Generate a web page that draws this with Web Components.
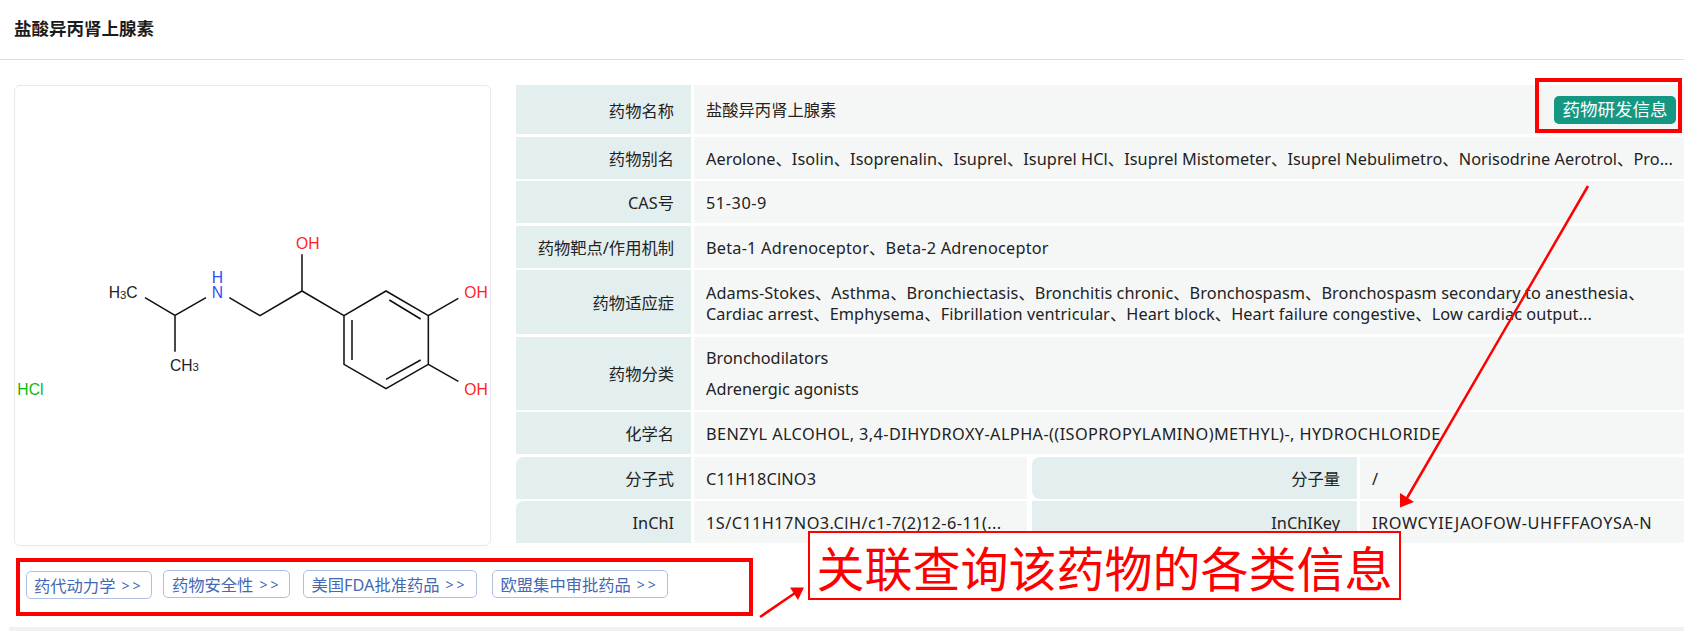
<!DOCTYPE html>
<html lang="zh">
<head>
<meta charset="utf-8">
<title>盐酸异丙肾上腺素</title>
<style>
  html, body { margin: 0; padding: 0; height: 631px; overflow: hidden; background: #fff; }
  body {
    position: relative;
    font-family: "Noto Sans", "Noto Sans CJK SC", sans-serif;
    font-size: 16px;
    color: #222;
  }
</style>
</head>
<body>
<drug-header>盐酸异丙肾上腺素</drug-header>

<drug-main>
  <mol-card slot="image"></mol-card>
  <info-table slot="info">
    <info-row label="药物名称" h="49">
      <drug-name>盐酸异丙肾上腺素<dev-button slot="action">药物研发信息</dev-button></drug-name>
    </info-row>
    <info-row label="药物别名" h="42" track=".05">Aerolone、Isolin、Isoprenalin、Isuprel、Isuprel HCl、Isuprel Mistometer、Isuprel Nebulimetro、Norisodrine Aerotrol、Pro...</info-row>
    <info-row label="CAS号" h="42" track=".55">51-30-9</info-row>
    <info-row label="药物靶点/作用机制" h="42" track=".22">Beta-1 Adrenoceptor、Beta-2 Adrenoceptor</info-row>
    <info-row label="药物适应症" h="64" track=".07">Adams-Stokes、Asthma、Bronchiectasis、Bronchitis chronic、Bronchospasm、Bronchospasm secondary to anesthesia、<br>Cardiac arrest、Emphysema、Fibrillation ventricular、Heart block、Heart failure congestive、Low cardiac output...</info-row>
    <info-row label="药物分类" h="73" lines="31" pad="1">Bronchodilators<br>Adrenergic agonists</info-row>
    <info-row label="化学名" h="42" track=".41">BENZYL ALCOHOL, 3,4-DIHYDROXY-ALPHA-((ISOPROPYLAMINO)METHYL)-, HYDROCHLORIDE</info-row>
    <info-pair>
      <info-row class="left" label="分子式" h="42" corner="tl" track=".15">C11H18ClNO3</info-row>
      <info-row class="right" label="分子量" h="42" corner="bl">/</info-row>
    </info-pair>
    <info-pair>
      <info-row class="left" label="InChI" h="42" corner="tl" track=".44">1S/C11H17NO3.ClH/c1-7(2)12-6-11(...</info-row>
      <info-row class="right" label="InChIKey" h="42" track=".58">IROWCYIEJAOFOW-UHFFFAOYSA-N</info-row>
    </info-pair>
  </info-table>
</drug-main>

<link-bar>
  <link-tag>药代动力学</link-tag>
  <link-tag>药物安全性</link-tag>
  <link-tag>美国FDA批准药品</link-tag>
  <link-tag>欧盟集中审批药品</link-tag>
</link-bar>

<page-strip></page-strip>

<note-layer>关联查询该药物的各类信息</note-layer>

<script>
function define(name, html, setup) {
  customElements.define(name, class extends HTMLElement {
    constructor() {
      super();
      this.attachShadow({ mode: 'open' }).innerHTML = html;
    }
    connectedCallback() {
      if (setup) setup(this, this.shadowRoot);
    }
  });
}

define('drug-header', `
  <style>
    :host {
      display: flex;
      align-items: center;
      box-sizing: border-box;
      height: 60px;
      padding: 0 0 4px 14px;
      border-bottom: 1px solid #dedede;
      font: 700 17.5px "Noto Sans CJK SC", sans-serif;
      color: #1c1c1c;
    }
  </style>
  <slot></slot>`);

define('drug-main', `
  <style>
    :host { display: flex; align-items: flex-start; padding: 25px 0 0 14px; gap: 25px; }
  </style>
  <slot name="image"></slot>
  <slot name="info"></slot>`);

define('mol-card', `
  <style>
    :host {
      display: block;
      flex: none;
      width: 475px;
      height: 459px;
      border: 1px solid #e6eaed;
      border-radius: 6px;
    }
    svg { display: block; }
    text { font-family: "Liberation Sans", sans-serif; font-size: 47px; }
    .o { fill: #ff1f1f; }
    .n { fill: #3050f8; }
    .c { fill: #222; }
    .cl { fill: #10b810; }
    .sub { font-size: 34px; }
  </style>
  <svg width="475" height="459" viewBox="15 86 475 459">
    <g transform="translate(0 220) scale(.33333)">
      <path fill="none" stroke="#111" stroke-width="4.6" d="M435 233 525 286 618 233M525 286V395M688 233 780 287 906 213 1032 287 1158 213 1285 287V433L1158 506 1032 433V287M906 213V103M1285 287 1375 235M1285 433 1375 484M1168 240 1262 297M1056 300V420M1158 478 1262 420"/>
      <text class="o" x="888" y="87">OH</text>
      <text class="n" x="635" y="189">H</text>
      <text class="n" x="635" y="235">N</text>
      <text class="c" x="326" y="234">H<tspan class="sub" dy="2">3</tspan><tspan dy="-2">C</tspan></text>
      <text class="c" x="510" y="452">CH<tspan class="sub" dy="2">3</tspan></text>
      <text class="o" x="1393" y="233">OH</text>
      <text class="o" x="1393" y="525">OH</text>
      <text class="cl" x="52" y="525">HCl</text>
    </g>
  </svg>`);

define('info-table', `
  <style>
    :host { display: flex; flex-direction: column; flex: none; width: 1168px; gap: 2.5px; }
  </style>
  <slot></slot>`);

define('info-pair', `
  <style>
    :host { display: grid; grid-template-columns: 511px 652px; gap: 5px; }
    ::slotted(.left) { --label-w: 175px; }
    ::slotted(.right) { --label-w: 325px; }
  </style>
  <slot></slot>`);

define('info-row', `
  <style>
    :host { display: flex; gap: 3px; height: var(--row-h, 42px); font-size: 16.3px; line-height: var(--lines, 21px); }
    .label {
      flex: none;
      box-sizing: border-box;
      width: var(--label-w, 175px);
      display: flex;
      align-items: center;
      justify-content: flex-end;
      padding: 3px 17px 0 0;
      background: #e3eeee;
      border-radius: var(--corner, 0);
    }
    .value {
      flex: 1;
      min-width: 0;
      display: flex;
      align-items: center;
      padding: var(--pad, 3px) 0 0 12px;
      background: #f5f7f7;
      white-space: nowrap;
    }
    .inner { flex: 1; min-width: 0; letter-spacing: var(--track, 0); }
  </style>
  <div class="label"></div>
  <div class="value"><div class="inner"><slot></slot></div></div>`,
  (el, root) => {
    root.querySelector('.label').textContent = el.getAttribute('label');
    el.style.setProperty('--row-h', el.getAttribute('h') + 'px');
    if (el.getAttribute('lines')) el.style.setProperty('--lines', el.getAttribute('lines') + 'px');
    if (el.getAttribute('track')) el.style.setProperty('--track', el.getAttribute('track') + 'px');
    if (el.getAttribute('pad')) el.style.setProperty('--pad', el.getAttribute('pad') + 'px');
    const corner = el.getAttribute('corner');
    if (corner === 'tl') el.style.setProperty('--corner', '8px 0 0 0');
    if (corner === 'bl') el.style.setProperty('--corner', '8px 0 0 8px');
  });

define('drug-name', `
  <style>
    :host { display: flex; align-items: center; justify-content: space-between; margin-top: -3px; padding-right: 8px; }
    span { padding-top: 1px; }
  </style>
  <span><slot></slot></span>
  <slot name="action"></slot>`);

define('dev-button', `
  <style>
    :host {
      display: flex;
      align-items: center;
      justify-content: center;
      width: 122px;
      height: 28px;
      border-radius: 5px;
      background: #149884;
      color: #fff;
      font-size: 17.5px;
    }
  </style>
  <slot></slot>`);

define('link-bar', `
  <style>
    :host { display: flex; align-items: flex-start; gap: 12.5px; margin: 24px 0 0 25.5px; height: 29px; }
    ::slotted(:first-child) { margin: 1px -1.5px 0 0; }
    ::slotted(:last-child) { margin-left: 3px; }
  </style>
  <slot></slot>`);

define('link-tag', `
  <style>
    :host {
      display: flex;
      align-items: center;
      box-sizing: border-box;
      height: 28px;
      padding: 0 8px 0 7.5px;
      border: 1px solid #adc1e3;
      border-radius: 5px;
      color: #4468b4;
      font-size: 16.3px;
      white-space: nowrap;
    }
    span { margin-left: 6px; letter-spacing: 3px; font-size: 14px; }
  </style>
  <slot></slot><span>&gt;&gt;</span>`);

define('page-strip', `
  <style>
    :host { display: block; height: 4px; margin: 28px 0 0 9px; background: #f0f0f5; }
  </style>`);

define('note-layer', `
  <style>
    :host { position: absolute; inset: 0; display: block; pointer-events: none; }
    .mark { position: absolute; box-sizing: border-box; border: 4px solid #f00; }
    .btn-mark { left: 1535px; top: 78px; width: 147px; height: 55px; }
    .tag-mark { left: 16px; top: 558px; width: 737px; height: 58px; }
    .note {
      position: absolute;
      left: 808px;
      top: 531px;
      box-sizing: border-box;
      width: 593px;
      height: 69px;
      display: flex;
      align-items: center;
      justify-content: center;
      border: 2px solid #f00;
      background: #fff;
      color: #f00;
      font: 400 48px/1 "Noto Sans CJK SC", sans-serif;
      white-space: nowrap;
    }
    svg { position: absolute; left: 0; top: 0; }
  </style>
  <svg width="1684" height="631">
    <path fill="none" stroke="#f00" stroke-width="2.5" d="M1588 186 1407 498"/>
    <path fill="#f00" d="M1400 507.5 1400 493 1414 502Z"/>
    <path fill="none" stroke="#f00" stroke-width="2.5" d="M760 617 795 593"/>
    <path fill="#f00" d="M804 587.5 790 587.5 798 600Z"/>
  </svg>
  <div class="mark btn-mark"></div>
  <div class="mark tag-mark"></div>
  <div class="note"><slot></slot></div>`);
</script>
</body>
</html>
